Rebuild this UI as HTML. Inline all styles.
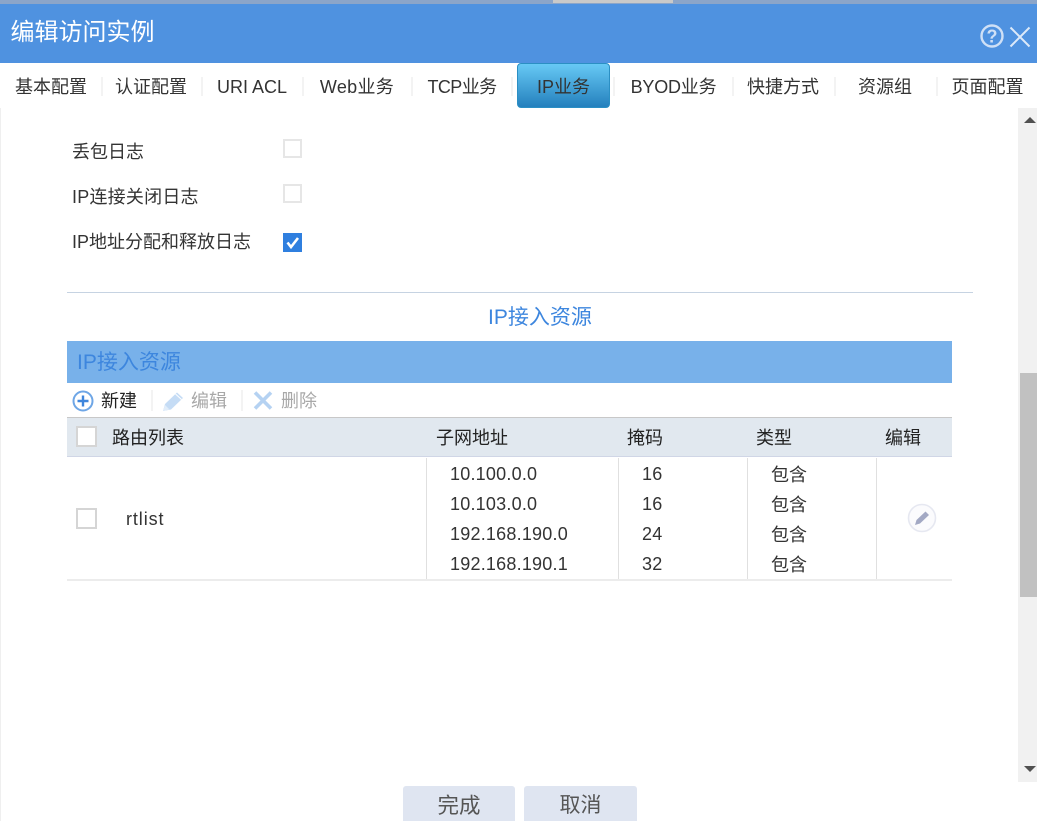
<!DOCTYPE html>
<html><head><meta charset="utf-8">
<style>
html,body{margin:0;padding:0;width:1037px;height:821px;overflow:hidden;background:#fff}
body{position:relative;font-family:"Liberation Sans","Noto Sans CJK SC",sans-serif;font-size:18px;color:#333}
.a{position:absolute;white-space:nowrap;line-height:26px;height:26px}
.b{position:absolute}
.sep{position:absolute;top:77px;width:2px;height:19px;background:#f3f3f3}
.cb{position:absolute;box-sizing:border-box;width:19px;height:19px;border:2px solid #e6e6e6;background:#fff}
.v{position:absolute;width:1px;background:#e0e0e0;top:458px;height:121px}
.tc{text-align:center}
.n{letter-spacing:.22px}
</style></head>
<body>
<div class="b" style="left:0;top:0;width:1037px;height:4px;background:#8ba5c9"></div>
<div class="b" style="left:553px;top:0;width:120px;height:3px;background:#c9c9c9"></div>
<div class="b" style="left:0;top:4px;width:1037px;height:59px;background:#4f92e0"></div>
<div class="a" style="left:10.500px;top:18px;font-size:24px;line-height:30px;height:30px;color:#fff">编辑访问实例</div>
<svg class="b" style="left:979px;top:23px" width="52" height="27" viewBox="0 0 52 27">
<circle cx="13" cy="13" r="10.5" fill="none" stroke="#cfe0f6" stroke-width="2.4"/>
<text x="13" y="19.500" text-anchor="middle" font-family="Liberation Sans" font-weight="bold" font-size="18" fill="#cfe0f6">?</text>
<path d="M31.500 4.500L50.500 23.500M50.500 4.500L31.500 23.500" stroke="#dce9f9" stroke-width="2" fill="none"/>
</svg>

<div class="a tc" style="left:0;top:74px;width:102px;color:#333">基本配置</div><div class="sep" style="left:101px"></div>
<div class="a tc" style="left:101px;top:74px;width:100px">认证配置</div><div class="sep" style="left:201px"></div>
<div class="a tc" style="left:202px;top:74px;width:100px">URI ACL</div><div class="sep" style="left:302px"></div>
<div class="a tc" style="left:302px;top:74px;width:110px;letter-spacing:.3px">Web业务</div><div class="sep" style="left:411px"></div>
<div class="a tc" style="left:412px;top:74px;width:100px;letter-spacing:-.6px">TCP业务</div><div class="sep" style="left:511px"></div>
<div class="b" style="left:517px;top:63px;width:93px;height:45px;box-sizing:border-box;border:1px solid #2b8fc4;border-radius:4px;background:linear-gradient(#67c9f5,#2480bd)"></div>
<div class="a tc" style="left:517px;top:74px;width:93px;color:#333">IP业务</div>
<div class="sep" style="left:613px"></div>
<div class="a tc" style="left:615px;top:74px;width:117px;letter-spacing:-.2px">BYOD业务</div><div class="sep" style="left:732px"></div>
<div class="a tc" style="left:733px;top:74px;width:100px">快捷方式</div><div class="sep" style="left:834px"></div>
<div class="a tc" style="left:835px;top:74px;width:100px">资源组</div><div class="sep" style="left:936px"></div>
<div class="a tc" style="left:938px;top:74px;width:99px">页面配置</div>

<div class="b" style="left:0;top:108px;width:1px;height:713px;background:#efefef"></div>
<div class="b" style="left:1018px;top:108px;width:19px;height:674px;background:#f1f1f1"></div>
<div class="b" style="left:1020px;top:373px;width:17px;height:224px;background:#c1c1c1"></div>
<svg class="b" style="left:1023px;top:115px" width="14" height="10"><path d="M1 8L7 2L13 8Z" fill="#505050"/></svg>
<svg class="b" style="left:1023px;top:764px" width="14" height="10"><path d="M1 2L13 2L7 8Z" fill="#505050"/></svg>

<div class="a" style="left:72px;top:139px">丢包日志</div>
<div class="cb" style="left:283px;top:139px"></div>
<div class="a n" style="left:72px;top:184px">IP连接关闭日志</div>
<div class="cb" style="left:283px;top:184px"></div>
<div class="a" style="left:72px;top:229px">IP地址分配和释放日志</div>
<div class="b" style="left:283px;top:233px;width:19px;height:19px;background:#2f7fdf"></div>
<svg class="b" style="left:283px;top:233px" width="19" height="19"><path d="M4.500 9.500L8 14L15 5" fill="none" stroke="#fff" stroke-width="2.600"/></svg>

<div class="b" style="left:67px;top:292px;width:906px;height:1px;background:#c6d3e2"></div>
<div class="a" style="left:488px;top:305px;font-size:21px;color:#3d86de">IP接入资源</div>

<div class="b" style="left:67px;top:341px;width:885px;height:42px;background:#78b1ea"></div>
<div class="a" style="left:77px;top:350px;font-size:21px;color:#3d86de">IP接入资源</div>

<svg class="b" style="left:72px;top:390px" width="22" height="22" viewBox="0 0 22 22"><circle cx="11" cy="11" r="9.500" fill="none" stroke="#6ea6e6" stroke-width="2"/><path d="M11 5.500V16.500M5.500 11H16.500" stroke="#3f86dc" stroke-width="2.400"/></svg>
<div class="a" style="left:101px;top:388px;font-size:18px;color:#222">新建</div>
<div class="b" style="left:151px;top:390px;width:2px;height:21px;background:#f3f3f3"></div>
<svg class="b" style="left:161px;top:389px" width="24" height="24" viewBox="0 0 24 24"><path d="M2 22L4 15L16 3.500L22 9L10 20.500Z" fill="#c5dcf5"/><path d="M2 22L4 16L8.500 20.500Z" fill="#e1edfa"/><path d="M14.500 5L20.500 10.500" stroke="#fff" stroke-width="1"/></svg>
<div class="a" style="left:191px;top:388px;color:#a8a8a8">编辑</div>
<div class="b" style="left:241px;top:390px;width:2px;height:21px;background:#f3f3f3"></div>
<svg class="b" style="left:252px;top:390px" width="22" height="22" viewBox="0 0 22 22"><path d="M3 2.500L19 18.500M19 2.500L3 18.500" stroke="#b5d2f2" stroke-width="3.600"/></svg>
<div class="a" style="left:281px;top:388px;color:#a8a8a8">删除</div>

<div class="b" style="left:67px;top:417px;width:885px;height:1px;background:#c8c8c8"></div>
<div class="b" style="left:67px;top:418px;width:885px;height:38px;background:#e1e8ef"></div>
<div class="b" style="left:67px;top:456px;width:885px;height:1px;background:#d0d6e6"></div>
<div class="cb" style="left:76px;top:426px;width:21px;height:21px;border-color:#d5d5d5"></div>
<div class="a" style="left:112px;top:425px;color:#222">路由列表</div>
<div class="a" style="left:436px;top:425px;color:#222">子网地址</div>
<div class="a" style="left:627px;top:425px;color:#222">掩码</div>
<div class="a" style="left:756px;top:425px;color:#222">类型</div>
<div class="a" style="left:885px;top:425px;color:#222">编辑</div>

<div class="v" style="left:426px"></div>
<div class="v" style="left:618px"></div>
<div class="v" style="left:747px"></div>
<div class="v" style="left:876px"></div>
<div class="b" style="left:67px;top:579px;width:885px;height:2px;background:#ececec"></div>

<div class="cb" style="left:76px;top:508px;width:21px;height:21px;border-color:#d5d5d5"></div>
<div class="a" style="left:126px;top:506px;letter-spacing:.9px">rtlist</div>

<div class="a n" style="left:450px;top:461px">10.100.0.0</div>
<div class="a n" style="left:450px;top:491px">10.103.0.0</div>
<div class="a n" style="left:450px;top:521px">192.168.190.0</div>
<div class="a n" style="left:450px;top:551px">192.168.190.1</div>
<div class="a n" style="left:642px;top:461px">16</div>
<div class="a n" style="left:642px;top:491px">16</div>
<div class="a n" style="left:642px;top:521px">24</div>
<div class="a n" style="left:642px;top:551px">32</div>
<div class="a" style="left:771px;top:462px">包含</div>
<div class="a" style="left:771px;top:492px">包含</div>
<div class="a" style="left:771px;top:522px">包含</div>
<div class="a" style="left:771px;top:552px">包含</div>

<svg class="b" style="left:907px;top:503px" width="30" height="30" viewBox="0 0 30 30"><circle cx="15" cy="15" r="13.500" fill="#fbfbfd" stroke="#e6e8f1" stroke-width="1.600"/><path d="M8 22L9.500 17L18.500 8.500L22 12L13 20.500Z" fill="#a3a9c4"/></svg>

<div class="b" style="left:403px;top:786px;width:112px;height:35px;background:#dfe5f1;border-radius:3px 3px 0 0"></div>
<div class="a tc" style="left:403px;top:793px;width:112px;font-size:21.500px;color:#555">完成</div>
<div class="b" style="left:524px;top:786px;width:113px;height:35px;background:#dfe5f1;border-radius:3px 3px 0 0"></div>
<div class="a tc" style="left:524px;top:793px;width:113px;font-size:21px;color:#555">取消</div>
</body></html>
